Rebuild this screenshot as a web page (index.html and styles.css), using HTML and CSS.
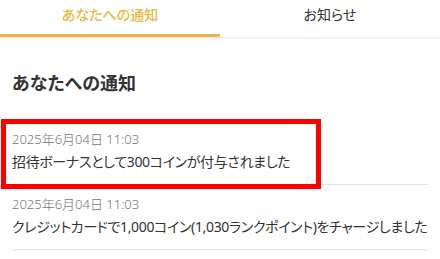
FILE: index.html
```html
<!DOCTYPE html>
<html lang="ja">
<head>
<meta charset="utf-8">
<link rel="stylesheet" href="styles.css">
</head>
<body>
<nav class="tabs">
  <div class="tab active">あなたへの通知</div>
  <div class="tab">お知らせ</div>
</nav>
<main class="content">
  <h1 class="title">あなたへの通知</h1>
  <ul class="list">
    <li class="item highlighted">
      <div class="date">2025年6月04日 11:03</div>
      <div class="text">招待ボーナスとして300コインが付与されました</div>
      <span class="mark"></span>
    </li>
    <li class="item">
      <div class="date">2025年6月04日 11:03</div>
      <div class="text">クレジットカードで1,000コイン(1,030ランクポイント)をチャージしました</div>
    </li>
  </ul>
</main>
</body>
</html>
```
FILE: styles.css
```css
* { box-sizing: border-box; }
html, body { margin: 0; padding: 0; background: #fff; }
body {
  font-family: "Noto Sans", "Noto Sans CJK JP", sans-serif;
  color: #333;
  font-feature-settings: "palt";
}
.tabs {
  display: flex;
  height: 37px;
  box-shadow: 0 1px 2px rgba(0,0,0,0.12);
}
.tab {
  flex: 1;
  text-align: center;
  font-size: 14px;
  line-height: 30px;
  color: #333;
}
.tab.active {
  color: #e9b840;
  border-bottom: 3px solid #e9b840;
  font-weight: 500;
}
.content {
  padding: 33px 12px 0;
}
.title {
  margin: 0 0 24px;
  font-size: 18px;
  line-height: 26px;
  font-weight: 700;
  color: #333;
}
.list { list-style: none; margin: 0; padding: 0; }
.item {
  position: relative;
  padding: 9px 0 11px;
  border-bottom: 1px solid #e5e5e5;
}
.date {
  font-size: 13px;
  line-height: 20px;
  color: #6f757c;
  font-weight: 300;
}
.text {
  margin-top: 2px;
  font-size: 14px;
  line-height: 22px;
  letter-spacing: -0.35px;
  color: #333;
  white-space: nowrap;
}
.mark {
  position: absolute;
  left: -11px;
  top: -1px;
  width: 320px;
  height: 70px;
  border: 5px solid #ff0000;
}
```
